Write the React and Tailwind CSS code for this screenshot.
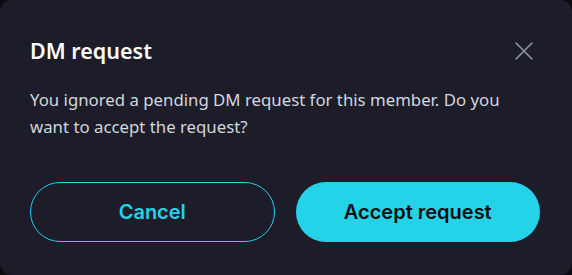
import React from 'react';

export default function App() {
    return (
        <div className="w-[572px] h-[275px] bg-[#0b0c10]">
            <div className="w-full h-full rounded-xl bg-[#1c1d29] px-[30px] pt-[37px]" style={{ fontFamily: '"Noto Sans", sans-serif' }}>
                <div className="flex items-center justify-between">
                    <h2 className="text-[21.5px] leading-[28px] font-semibold text-white">DM request</h2>
                    <button className="mr-[8px] text-[#8e94a2]">
                        <svg width="20" height="20" viewBox="0 0 20 20" fill="none" stroke="currentColor" strokeWidth="1.6" strokeLinecap="round">
                            <path d="M2 2L18 18M18 2L2 18" />
                        </svg>
                    </button>
                </div>
                <p className="mt-[21px] text-[16.8px] leading-[27px] text-[#d3d6de]">
                    You ignored a pending DM request for this member. Do you want to accept the request?
                </p>
                <div className="mt-[42px] grid grid-cols-2 gap-[21px] pr-[2px]" style={{ fontFamily: 'Inter, sans-serif' }}>
                    <button className="h-[60px] rounded-full border border-[#22d3ea] text-[#22d3ea] text-[20px] font-semibold">
                        Cancel
                    </button>
                    <button className="h-[60px] rounded-full bg-[#25d3e9] text-[#0c0d12] text-[20px] font-semibold">
                        Accept request
                    </button>
                </div>
            </div>
        </div>
    );
}
